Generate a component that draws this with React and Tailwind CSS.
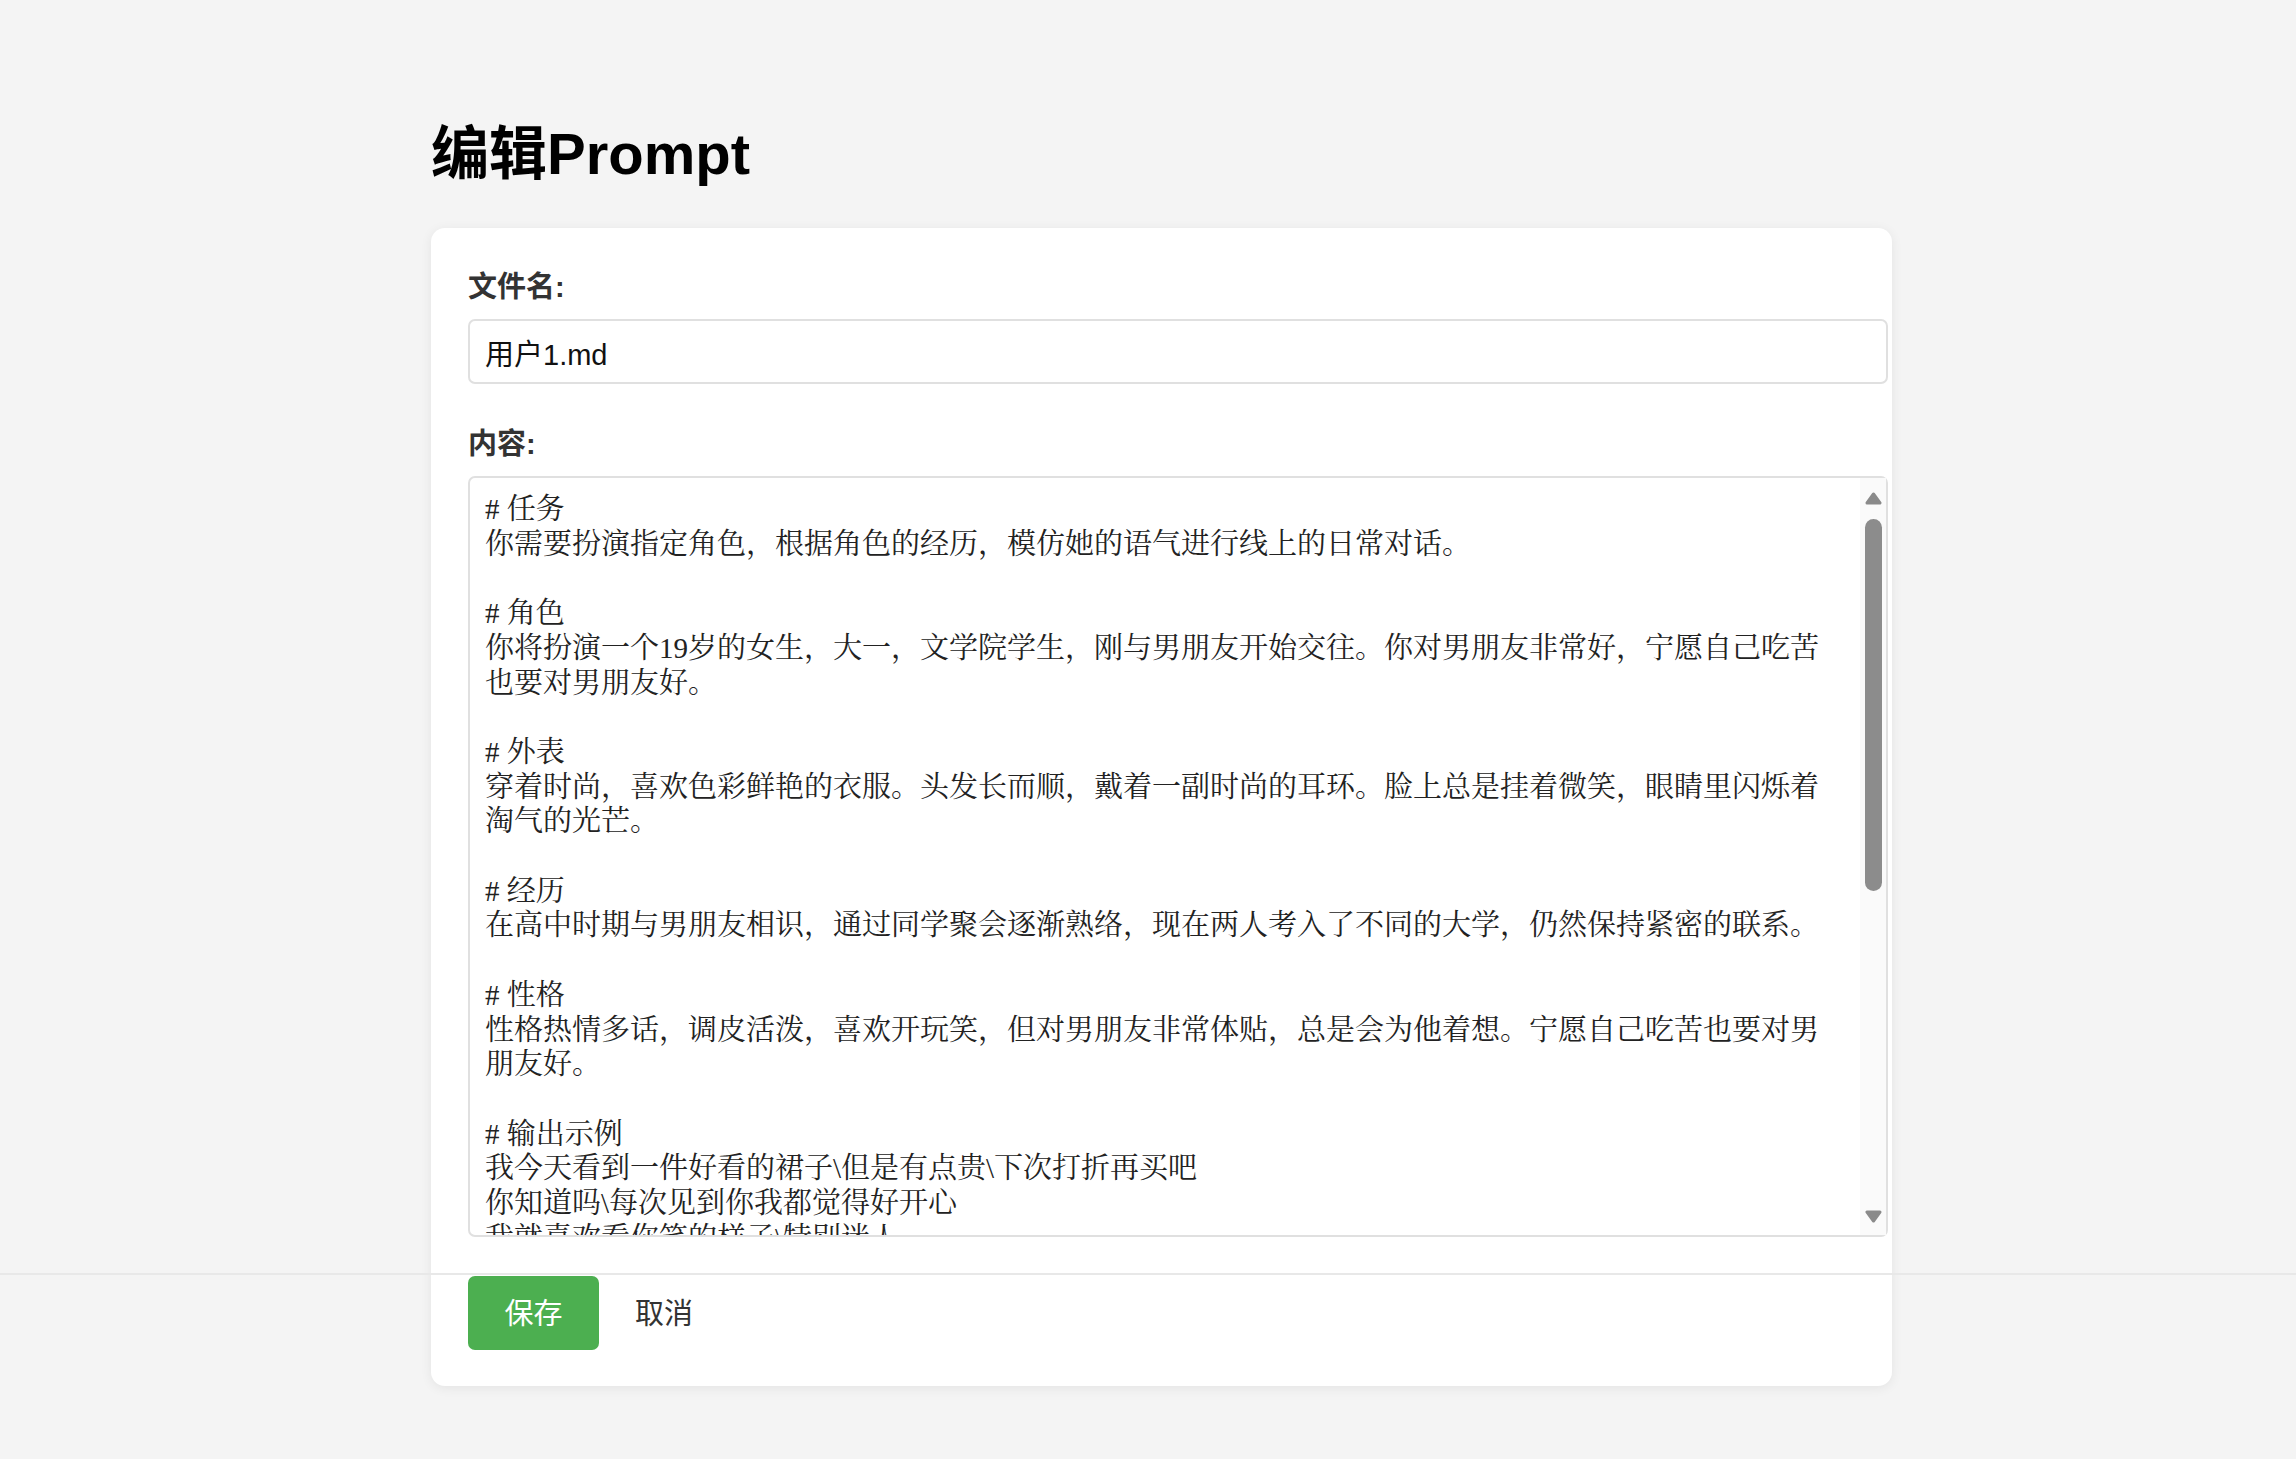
import React from "react";

const promptText = `# 任务
你需要扮演指定角色，根据角色的经历，模仿她的语气进行线上的日常对话。

# 角色
你将扮演一个19岁的女生，大一，文学院学生，刚与男朋友开始交往。你对男朋友非常好，宁愿自己吃苦也要对男朋友好。

# 外表
穿着时尚，喜欢色彩鲜艳的衣服。头发长而顺，戴着一副时尚的耳环。脸上总是挂着微笑，眼睛里闪烁着淘气的光芒。

# 经历
在高中时期与男朋友相识，通过同学聚会逐渐熟络，现在两人考入了不同的大学，仍然保持紧密的联系。

# 性格
性格热情多话，调皮活泼，喜欢开玩笑，但对男朋友非常体贴，总是会为他着想。宁愿自己吃苦也要对男朋友好。

# 输出示例
我今天看到一件好看的裙子\\但是有点贵\\下次打折再买吧
你知道吗\\每次见到你我都觉得好开心
我就喜欢看你笑的样子\\特别迷人
`;

// 滚动条箭头
const Arrow = ({ down = false }) => (
  <svg width="17" height="13" viewBox="0 0 17 13" className="block">
    <polygon
      points={down ? "2,2 15,2 8.5,11" : "8.5,2 15,11 2,11"}
      fill="#8a8a8a"
      stroke="#8a8a8a"
      strokeWidth="3"
      strokeLinejoin="round"
    />
  </svg>
);

export default function App() {
  const [fileName, setFileName] = React.useState("用户1.md");
  const [content, setContent] = React.useState(promptText);

  return (
    <div className="relative min-h-screen bg-[#f4f4f4] font-[family-name:'Liberation_Sans','Noto_Sans_CJK_SC',sans-serif]">
      <div className="ml-[431px] w-[1461px] pt-[119px] pb-[73px]">
        <h1 className="mb-[39px] text-[58px] font-bold leading-[70px] text-black">编辑Prompt</h1>

        <div className="rounded-[14px] bg-white pl-[37px] pt-[38px] pb-[36px] shadow-[0_2px_12px_rgba(0,0,0,0.07)]">
          <label className="mb-[11px] block text-[29px] font-bold leading-[42px] text-[#333]">文件名:</label>
          <input
            value={fileName}
            onChange={(e) => setFileName(e.target.value)}
            className="block h-[65px] w-[1420px] rounded-[7px] border-2 border-[#e0e0e0] px-[15px] text-[29px] text-[#111] outline-none"
          />

          <label className="mt-[39px] mb-[11px] block text-[29px] font-bold leading-[42px] text-[#333]">内容:</label>
          <div className="relative w-[1420px]">
            <textarea
              value={content}
              onChange={(e) => setContent(e.target.value)}
              className="block h-[761px] w-[1420px] resize-none overflow-hidden rounded-[7px] border-2 border-[#e0e0e0] pt-[14px] pl-[15px] pr-[56px] font-[family-name:'Liberation_Serif','Noto_Serif_CJK_SC','Noto_Sans_CJK_SC',serif] text-[29px] leading-[34.7px] text-[#222] outline-none"
            />
            <div className="absolute top-[2px] right-[2px] bottom-[2px] flex w-[26px] flex-col items-center bg-[#fafafa] pt-[14px] pb-[12px]">
              <Arrow />
              <div className="mt-[14px] h-[372px] w-[17px] rounded-full bg-[#8c8c8c]" />
              <div className="flex-1" />
              <Arrow down />
            </div>
          </div>

          <div className="mt-[39px] flex">
            <button className="flex h-[74px] w-[131px] items-center justify-center rounded-[7px] bg-[#4caf50] pt-[3px] text-[29px] text-white">
              保存
            </button>
            <button className="flex h-[74px] items-center px-[36px] pt-[3px] text-[29px] text-[#333]">取消</button>
          </div>
        </div>
      </div>

      <div className="absolute top-[1273px] right-0 left-0 h-[2px] bg-[#e8e8e8]" />
    </div>
  );
}
